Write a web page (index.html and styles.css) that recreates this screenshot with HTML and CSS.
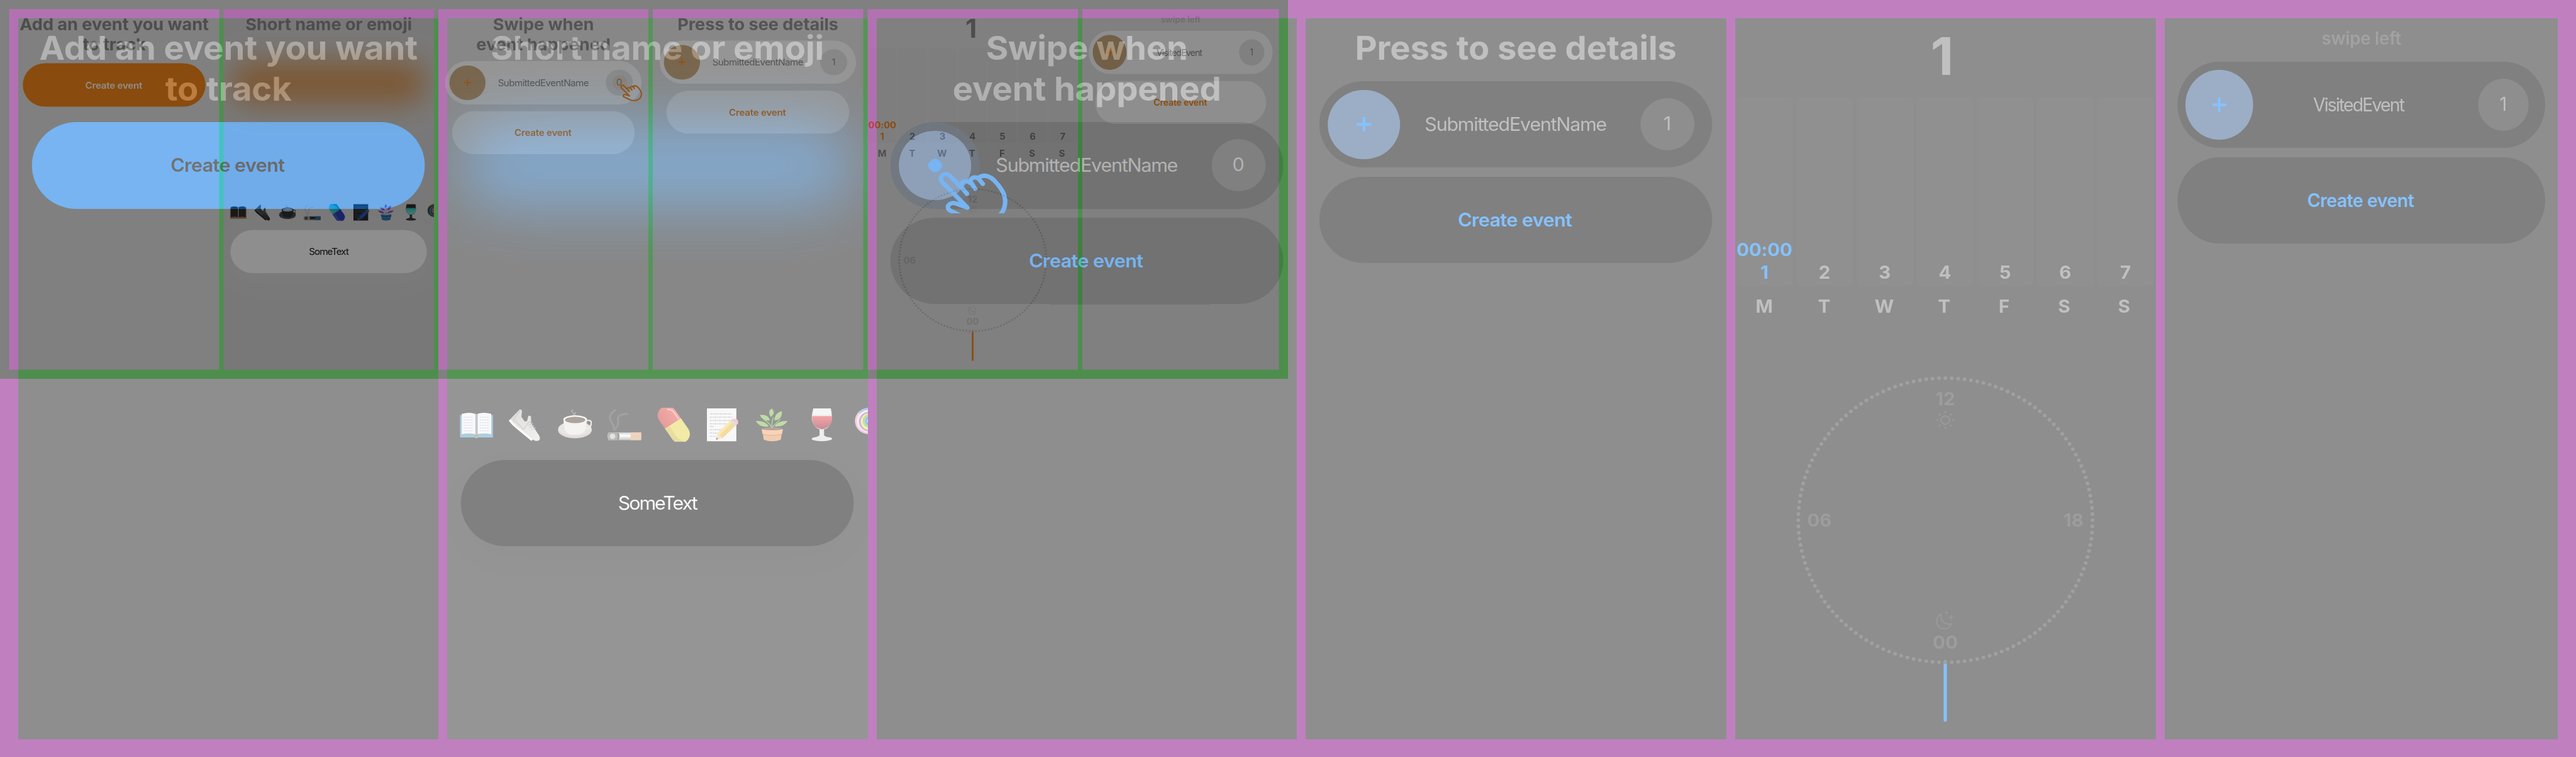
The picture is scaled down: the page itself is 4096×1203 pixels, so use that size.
FILE: index.html
```
<!DOCTYPE html>
<html lang="en">
<head>
<meta charset="utf-8">
<title>Event tracker onboarding</title>
<link rel="stylesheet" href="styles.css">
</head>
<body>
<svg class="sprite" aria-hidden="true">
  <defs>
    <linearGradient id="g-wine" x1="0" y1="0" x2="0" y2="1"><stop offset="0" stop-color="#e8474f"/><stop offset="1" stop-color="#8c1d2c"/></linearGradient>
    <linearGradient id="g-shoe" x1="0" y1="0" x2="1" y2="1"><stop offset="0" stop-color="#b9b7b4"/><stop offset="1" stop-color="#e6e5e2"/></linearGradient>
    <linearGradient id="g-red" x1="0" y1="0" x2="0" y2="1"><stop offset="0" stop-color="#e85a50"/><stop offset="1" stop-color="#c83a34"/></linearGradient>
    <linearGradient id="g-cig" x1="0" y1="0" x2="0" y2="1"><stop offset="0" stop-color="#a8a8a8"/><stop offset=".4" stop-color="#fff"/><stop offset="1" stop-color="#8d8d8d"/></linearGradient>
  </defs>
  <symbol id="book" viewBox="0 0 60 60">
    <path d="M1 12h58v41H33q-3 3-6 0H1z" fill="#5b9cc0"/>
    <path d="M4 10q13-4 24 0v37q-12-3-24 0zM56 10q-13-4-24 0v37q12-3 24 0z" fill="#f3f3f8"/>
    <path d="M28 10h4v37h-4z" fill="#8e8e94"/>
    <path d="M7 16h17M7 21h17M7 26h17M7 31h17M7 36h17M7 41h17M36 16h17M36 21h17M36 26h17M36 31h17M36 36h17M36 41h17" stroke="#b9b9c9" stroke-width="1.2" stroke-dasharray="3 1"/>
    <path d="M25 48h10l-2 4h-6z" fill="#8f8440"/>
  </symbol>
  <symbol id="shoe" viewBox="0 0 60 60">
    <path d="M2 21 20 2q4-1 4 4l-1 9 6 9 4-1 2-9q3-2 5 1v12l14 22q4 7-1 10-6 2-14-5L10 33Q4 27 2 21z" fill="url(#g-shoe)"/>
    <path d="M2 21q6 8 12 13l28 24" fill="none" stroke="#f6f5f2" stroke-width="4"/>
    <path d="M20 5 9 20l18 18 10-14M33 27l8-4M35 31l8-4M37 35l8-4M40 39l8-4" fill="none" stroke="#a5a3a0" stroke-width="1.6"/>
  </symbol>
  <symbol id="coffee" viewBox="0 0 60 60">
    <path d="M26 14q4-4 0-7t1-5M31 14q-3-4 1-7" fill="none" stroke="#70706e" stroke-width="1.8"/>
    <ellipse cx="30" cy="39" rx="30" ry="15.500" fill="#c0bdb6"/>
    <ellipse cx="30" cy="37" rx="29" ry="13" fill="#cfccc6"/>
    <path d="M49 23q11-4 10 5-1 9-13 9" fill="none" stroke="#dcdad5" stroke-width="2.500"/>
    <path d="M10 21q0 25 12 27h17q12-4 12-27z" fill="#e8e6e2"/>
    <ellipse cx="30.500" cy="20" rx="21" ry="7.500" fill="#f4f2ee"/>
    <ellipse cx="30.500" cy="21" rx="18" ry="6" fill="#5b463c"/>
  </symbol>
  <symbol id="cigarette" viewBox="0 0 60 60">
    <path d="M15 2q-17 11-7 24 5 9 4 15M36 10q-20 0-17 13 1 8-6 16" fill="none" stroke="#4b4b4b" stroke-width="3.500" opacity=".8"/>
    <path d="M2 44h58v14H2q-3-7 0-14z" fill="url(#g-cig)"/>
    <path d="M41 44h19v14H41z" fill="#dda77c"/>
    <path d="M1 45q10-3 19 0 3 7-2 13H3q-3-7-2-13z" fill="#77736e"/>
    <circle cx="9" cy="51" r="5" fill="#c9c7c4"/>
    <path d="M18 45q4 6 0 13" stroke="#333" stroke-width="2" fill="none"/>
  </symbol>
  <symbol id="pill" viewBox="0 0 60 60">
    <g transform="rotate(56 30 30)">
      <path d="M32 13H13a17 17 0 0 0 0 34h19z" transform="translate(-4)" fill="url(#g-red)"/>
      <path d="M28 13h23a17 17 0 0 1 0 34H28z" transform="translate(-1)" fill="#e8d54e"/>
      <path d="M28 38h24q8-1 12-8-1 17-14 17H28z" fill="#c0a838" opacity=".6"/>
      <path d="M0 24q4-7 13-7h13" fill="none" stroke="#fff" stroke-width="2.500" opacity=".45"/>
    </g>
  </symbol>
  <symbol id="memo" viewBox="0 0 60 60">
    <path d="M2 0h52v60H2z" fill="#f0f0f0"/>
    <path d="M8 10h38M7 16h40M7 22h36M7 28h30M7 33h8M7 39h20M7 45h14M7 51h10" stroke="#a9a9a9" stroke-width="1.600" stroke-dasharray="4 1 2 1"/>
    <path d="m18 57 3-12 26-26 9 9-26 26z" fill="#eab93c"/>
    <path d="m21 45 26-26 3 3-26 27z" fill="#f6d36c"/>
    <path d="m18 57 3-12 9 9z" fill="#e9cfa0"/><path d="m18 57 1-4 3 3z" fill="#333"/>
    <path d="m43 23 4-4 9 9-4 4z" fill="#b9c0c8"/>
    <path d="m46 20 3-1q10-1 8 9l-1 1z" fill="#f0919f"/>
  </symbol>
  <symbol id="plant" viewBox="0 0 60 60">
    <path d="M29 38q0-14 3-22M29 34Q22 24 15 20M30 34l14-14" fill="none" stroke="#5c9a3c" stroke-width="2"/>
    <path d="M27 15q-6-9 2-15 8 8-1 15zM26 22Q12 23 8 12q15-2 18 10zM34 22q0-14 13-17 1 15-13 17zM24 33Q8 36 1 23q17-1 23 10zM34 33q6-11 23-10-6 11-23 10z" fill="#7fb84e"/>
    <path d="M12 37q18-4 36 0l-3 20q-15 6-30 0z" fill="#e79a62"/>
    <ellipse cx="30" cy="38" rx="18" ry="2.500" fill="#6b4432"/>
    <path d="M11 38q19 4 38 0l-2 9q-17 4-34 0z" fill="#f0a66f"/>
    <path d="M13 47q17 5 34 0" fill="none" stroke="#c27a48" stroke-width="1.500"/>
  </symbol>
  <symbol id="wine" viewBox="0 0 60 60">
    <path d="M15 0h31q3 12 1 23-3 14-13 15v11q2 3 12 4 5 3-1 5-15 4-30 0-6-2 0-5 8-1 11-4V38Q17 36 13 23q-2-10 2-23z" fill="#dcdcdc"/>
    <path d="M13 14h35q1 8-2 14-4 8-15.500 10Q18 36 15 28q-3-7-2-14z" fill="url(#g-wine)"/>
    <path d="M16 2h29l1 9H15z" fill="#ececec"/>
  </symbol>
  <symbol id="candy" viewBox="0 0 60 60">
    <circle cx="25" cy="23" r="24" fill="#e0a0c8"/>
    <path d="M8 8q7-9 17-9 14 0 20 10L25 23z" fill="#4f9bef"/>
    <circle cx="25" cy="23" r="20.500" fill="#f4ddc9"/><circle cx="26" cy="24" r="18" fill="#a568c4"/>
    <circle cx="27" cy="24" r="15.500" fill="#f3e45b"/><circle cx="27" cy="23" r="12.500" fill="#76c256"/>
    <circle cx="28" cy="23" r="9" fill="#3f86e6"/><circle cx="28" cy="23" r="5" fill="#f3ead9"/><circle cx="28" cy="23" r="3.500" fill="#e55344"/>
  </symbol>
  <symbol id="plus" viewBox="0 0 26 26">
    <path d="M13 2v22M2 13h22" stroke="currentColor" stroke-width="4.600" stroke-linecap="round"/>
  </symbol>
  <symbol id="hand" viewBox="280 280 380 300">
    <g fill="none" stroke="currentColor" stroke-width="24" stroke-linecap="round" stroke-linejoin="round">
      <path d="M405 372 346 309C315 279 280 315 305 345L370 412 438 484 378 461C335 448 318 490 350 502L405 530C470 570 540 572 585 546 620 525 640 490 640 448 640 415 628 392 600 355 575 322 553 307 530 307 505 308 492 318 502 330L520 352"/>
      <path d="M500 325C478 304 444 325 457 345L479 379M450 345C428 328 394 345 404 368L435 407"/>
    </g>
  </symbol>
  <symbol id="clock" viewBox="-260 -260 520 520">
    <circle r="253.400" fill="none" stroke="currentColor" stroke-width="6.600" stroke-linecap="round" pathLength="144" stroke-dasharray="0 1"/>
  </symbol>
  <symbol id="sun" viewBox="-18 -18 36 36">
    <g fill="none" stroke="currentColor" stroke-width="2.400" stroke-linecap="round">
      <circle r="7.500"/>
      <path d="M0-16v3M0 16v-3M-16 0h3M16 0h-3M-11.300-11.300l2.200 2.200M11.300-11.300l-2.200 2.200M-11.300 11.300l2.200-2.200M11.300 11.300l-2.200-2.200"/>
    </g>
  </symbol>
  <symbol id="moon" viewBox="0 0 34 34">
    <path d="M10 6C-1 12 0 32 15 32c6 0 11-4 12-9C17 26 8 18 10 6z" fill="none" stroke="currentColor" stroke-width="2.200" stroke-linejoin="round"/>
    <path d="m19 0 1 3 3 1-3 1-1 3-1-3-3-1 3-1zM27 6l1.200 4.300L32 12l-3.800 1.500L27 18l-1.200-4.500L22 12l3.800-1.700z" fill="currentColor"/>
  </symbol>
</svg>

<main class="board board-mini">
  <section class="screen"><div class="view">
    <h2 class="heading">Add an event you want<br>to track</h2>
    <div class="pill create create-primary">Create event</div>
  </div></section>
  <section class="screen screen-sheet"><div class="view">
    <div class="glow"></div>
    <h2 class="heading">Short name or emoji</h2>
    <div class="emoji-row">
      <svg><use href="#book"/></svg><svg><use href="#shoe"/></svg><svg><use href="#coffee"/></svg><svg><use href="#cigarette"/></svg><svg><use href="#pill"/></svg><svg><use href="#memo"/></svg><svg><use href="#plant"/></svg><svg><use href="#wine"/></svg><svg><use href="#candy"/></svg>
    </div>
    <div class="pill field">SomeText</div>
  </div></section>
  <section class="screen"><div class="view">
    <h2 class="heading">Swipe when<br>event happened</h2>
    <div class="pill event">
      <span class="add"><svg><use href="#plus"/></svg></span>
      <span class="name">SubmittedEventName</span>
      <span class="count">0</span>
      <span class="touch"></span>
    </div>
    <div class="pill create">Create event</div>
    <div class="hand hand-end"><svg><use href="#hand"/></svg></div>
  </div></section>
  <section class="screen"><div class="view">
    <h2 class="heading">Press to see details</h2>
    <div class="pill event">
      <span class="add"><svg><use href="#plus"/></svg></span>
      <span class="name">SubmittedEventName</span>
      <span class="count">1</span>
    </div>
    <div class="pill create">Create event</div>
  </div></section>
  <section class="screen"><div class="view">
    <div class="total">1</div>
    <div class="week">
      <div class="bar today"><span>00:00</span><span>1</span></div><div class="bar"><span>2</span></div><div class="bar"><span>3</span></div><div class="bar"><span>4</span></div><div class="bar"><span>5</span></div><div class="bar"><span>6</span></div><div class="bar"><span>7</span></div>
    </div>
    <div class="days"><span>M</span><span>T</span><span>W</span><span>T</span><span>F</span><span>S</span><span>S</span></div>
    <div class="dial">
      <svg class="ring"><use href="#clock"/></svg>
      <div class="noon"><span>12</span><svg><use href="#sun"/></svg></div>
      <div class="sides"><span>06</span><span>18</span></div>
      <div class="midnight"><svg><use href="#moon"/></svg><span>00</span></div>
    </div>
    <div class="marker"></div>
  </div></section>
  <section class="screen screen-last"><div class="view">
    <div class="hint">swipe left</div>
    <div class="pill event">
      <span class="add"><svg><use href="#plus"/></svg></span>
      <span class="name name-short">VisitedEvent</span>
      <span class="count">1</span>
    </div>
    <div class="pill create">Create event</div>
  </div></section>
</main>

<main class="board board-full">
  <section class="screen"><div class="view">
    <h2 class="heading">Add an event you want<br>to track</h2>
    <div class="pill create create-primary">Create event</div>
  </div></section>
  <section class="screen screen-sheet"><div class="view">
    <div class="glow"></div>
    <h2 class="heading">Short name or emoji</h2>
    <div class="emoji-row">
      <svg><use href="#book"/></svg><svg><use href="#shoe"/></svg><svg><use href="#coffee"/></svg><svg><use href="#cigarette"/></svg><svg><use href="#pill"/></svg><svg><use href="#memo"/></svg><svg><use href="#plant"/></svg><svg><use href="#wine"/></svg><svg><use href="#candy"/></svg>
    </div>
    <div class="pill field">SomeText</div>
  </div></section>
  <section class="screen"><div class="view">
    <h2 class="heading">Swipe when<br>event happened</h2>
    <div class="pill event event-pressed">
      <span class="add"><i class="dot"></i></span>
      <span class="name">SubmittedEventName</span>
      <span class="count">0</span>
    </div>
    <div class="pill create">Create event</div>
    <div class="hand hand-start"><svg><use href="#hand"/></svg></div>
  </div></section>
  <section class="screen"><div class="view">
    <h2 class="heading">Press to see details</h2>
    <div class="pill event">
      <span class="add"><svg><use href="#plus"/></svg></span>
      <span class="name">SubmittedEventName</span>
      <span class="count">1</span>
    </div>
    <div class="pill create">Create event</div>
  </div></section>
  <section class="screen"><div class="view">
    <div class="total">1</div>
    <div class="week">
      <div class="bar today"><span>00:00</span><span>1</span></div><div class="bar"><span>2</span></div><div class="bar"><span>3</span></div><div class="bar"><span>4</span></div><div class="bar"><span>5</span></div><div class="bar"><span>6</span></div><div class="bar"><span>7</span></div>
    </div>
    <div class="days"><span>M</span><span>T</span><span>W</span><span>T</span><span>F</span><span>S</span><span>S</span></div>
    <div class="dial">
      <svg class="ring"><use href="#clock"/></svg>
      <div class="noon"><span>12</span><svg><use href="#sun"/></svg></div>
      <div class="sides"><span>06</span><span>18</span></div>
      <div class="midnight"><svg><use href="#moon"/></svg><span>00</span></div>
    </div>
    <div class="marker"></div>
  </div></section>
  <section class="screen screen-last"><div class="view">
    <div class="hint">swipe left</div>
    <div class="pill event">
      <span class="add"><svg><use href="#plus"/></svg></span>
      <span class="name name-short">VisitedEvent</span>
      <span class="count">1</span>
    </div>
    <div class="pill create">Create event</div>
  </div></section>
</main>
</body>
</html>
```
FILE: styles.css
```
/* 1rem is ten design units; the board is 459.6 x 135 rem */
html {
  font-size: 8.9121px;
}
* {
  box-sizing: border-box;
}
body {
  margin: 0;
  width: 4096px;
  height: 1203px;
  overflow: hidden;
  position: relative;
  background: #fff;
  font-family: Inter, "Liberation Sans", sans-serif;
  color: #818181;
}
.sprite {
  position: absolute;
  width: 0;
  height: 0;
}
svg {
  display: block;
}

.board {
  position: absolute;
  left: 0;
  top: 0;
  display: flex;
  gap: 1.6rem;
  width: 459.6rem;
  height: 135rem;
  padding: 3.2rem;
  background: #800080;
}
.board-full {
  opacity: .5;
}
.board-mini {
  transform: scale(.5);
  transform-origin: 0 0;
  filter: invert(1);
}

.screen {
  flex: 0 0 75rem;
  height: 128.6rem;
  overflow: hidden;
  background: #1c1c1c;
}
.screen-last {
  flex-basis: 70.2rem;
}
.screen-sheet {
  background: #2b2b2b;
}
.view {
  position: relative;
  display: flex;
  flex-direction: column;
  width: 72.4rem;
  height: 100%;
  padding: 1.7rem 2.35rem 0;
  transform: scaleX(1.0359);
  transform-origin: 0 0;
}
.screen-last .view {
  transform: scaleX(.9696);
}

.heading {
  margin: 0 -2rem 2.3rem;
  font-size: 5.9rem;
  font-weight: 700;
  line-height: 7.3rem;
  letter-spacing: -.02rem;
  text-align: center;
  white-space: nowrap;
  position: relative;
}
.pill {
  position: relative;
  flex: none;
  display: flex;
  align-items: center;
  height: 15.4rem;
  border-radius: 7.7rem;
  background: #000;
  font-size: 3.3rem;
}
.event {
  padding: 0 3.1rem 0 1.5rem;
  margin-bottom: 1.6rem;
}
.create {
  justify-content: center;
  padding-right: .3rem;
  color: #0a84ff;
  font-weight: 600;
  letter-spacing: -.06rem;
}
.create-primary {
  background: #0a84ff;
  color: #000;
}
.board-mini .create {
  margin: .8rem 2.35rem 0;
}
.add {
  flex: none;
  display: grid;
  place-items: center;
  width: 12.4rem;
  height: 12.4rem;
  border-radius: 50%;
  background: #375d8d;
  color: #0a84ff;
}
.add svg {
  width: 2.6rem;
  height: 2.6rem;
}
.name {
  flex: 1;
  padding-right: 1.6rem;
  text-align: center;
  letter-spacing: -.13rem;
}
.name-short {
  padding-right: 2.6rem;
  letter-spacing: -.22rem;
}
.count {
  flex: none;
  width: 9.3rem;
  height: 9.3rem;
  border-radius: 50%;
  background: #1c1c1c;
  line-height: 9.3rem;
  text-align: center;
}
.event-pressed::before {
  content: "";
  position: absolute;
  left: 0;
  top: 0;
  width: 15.4rem;
  height: 15.4rem;
  border-radius: 50%;
  background: rgba(10, 132, 255, .1);
}
.event-pressed .add {
  position: relative;
}
.dot {
  width: 2.2rem;
  height: 2.2rem;
  border-radius: .9rem;
  background: #0a84ff;
  transform: rotate(45deg);
}
.touch {
  position: absolute;
  right: 4.9rem;
  top: 5.1rem;
  width: 5.2rem;
  height: 5.2rem;
  border-radius: 50%;
  background: rgba(10, 132, 255, .15);
}
.hand {
  position: absolute;
  color: #0a84ff;
  overflow: hidden;
}
.hand-start {
  left: 10.55rem;
  top: 27.13rem;
  width: 12.23rem;
  height: 7.67rem;
}
.hand-start svg {
  width: 12.23rem;
  height: 10rem;
}
.hand-end {
  left: 62.6rem;
  top: 26.8rem;
}
.hand-end svg {
  width: 7.76rem;
  height: 6.35rem;
}

/* emoji sheet */
.glow {
  position: absolute;
  left: 2.4rem;
  top: 18.6rem;
  width: 67.6rem;
  height: 15.4rem;
  border-radius: 7.7rem;
  background: #2477c8;
  opacity: .86;
  filter: blur(5rem);
}
.emoji-row {
  display: flex;
  gap: 2.65rem;
  margin: 58.2rem -10rem 3.2rem -.25rem;
  position: relative;
}
.emoji-row svg {
  flex: none;
  width: 5.85rem;
  height: 6.1rem;
}
.field {
  justify-content: center;
  color: #f2f2f2;
  letter-spacing: -.22rem;
  box-shadow: 0 2rem 7rem rgba(0, 0, 0, .15);
}

/* week details */
.total {
  height: 12.5rem;
  font-size: 9.2rem;
  font-weight: 700;
  line-height: 10.2rem;
  text-align: center;
  padding: .1rem 1.1rem 0 0;
}
.week,
.days {
  display: grid;
  grid-template-columns: repeat(7, 1fr);
  margin: 0 -2.1rem 0 -2.25rem;
  font-size: 3.2rem;
  font-weight: 700;
  text-align: center;
}
.week {
  column-gap: .5rem;
}
.bar {
  display: flex;
  flex-direction: column;
  justify-content: flex-end;
  height: 33.5rem;
  padding-bottom: .2rem;
  border-radius: .8rem;
  background: #202020;
  line-height: 4.1rem;
}
.today {
  color: #0a84ff;
  letter-spacing: -.02rem;
}
.days {
  margin-left: -2.5rem;
  margin-top: 1.6rem;
  line-height: 4.2rem;
}
.dial {
  position: relative;
  align-self: center;
  flex: none;
  display: flex;
  flex-direction: column;
  justify-content: space-between;
  width: 52rem;
  height: 52rem;
  margin-top: 10.1rem;
  padding: 2.2rem 2.2rem;
  color: #3a3a3a;
  font-size: 3.2rem;
  font-weight: 700;
  line-height: 4.2rem;
}
.ring {
  position: absolute;
  inset: 0;
  width: 52rem;
  height: 52rem;
  color: #404040;
}
.noon,
.midnight {
  display: flex;
  flex-direction: column;
  align-items: center;
}
.noon svg,
.midnight svg {
  width: 3.5rem;
  height: 3.5rem;
  color: #343434;
}
.sides {
  display: flex;
  justify-content: space-between;
}
.marker {
  flex: none;
  align-self: center;
  width: .6rem;
  height: 11rem;
  margin-top: -1.1rem;
  border-radius: .3rem;
  background: #0a84ff;
}
.hint {
  height: 6.1rem;
  color: #444;
  font-size: 3.2rem;
  font-weight: 600;
  line-height: 3.8rem;
  letter-spacing: -.03rem;
  text-align: center;
}
```
